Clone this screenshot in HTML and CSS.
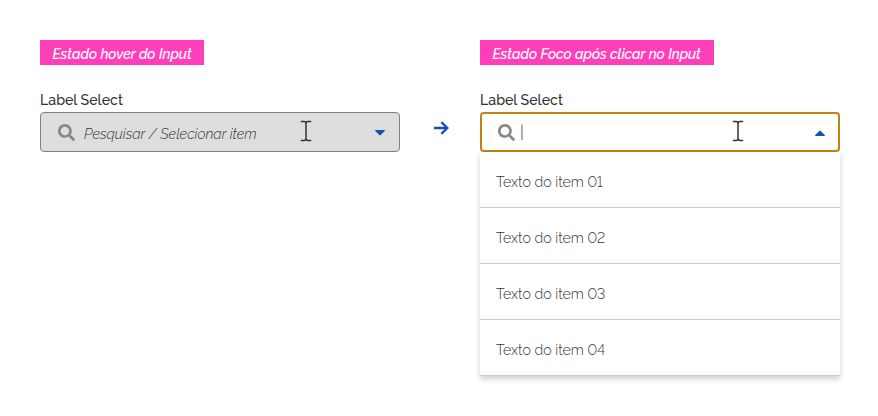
FILE: index.html
```html
<!DOCTYPE html>
<html lang="pt-BR">
<head>
<meta charset="utf-8">
<title>Select</title>
<link rel="stylesheet" href="styles.css">
</head>
<body>
<svg class="defs" width="0" height="0" aria-hidden="true">
  <symbol id="search" viewBox="0 0 512 512"><path d="M505 442.700 405.300 343c-4.500-4.500-10.600-7-17-7H372c27.600-35.300 44-79.700 44-128C416 93.100 322.900 0 208 0S0 93.100 0 208s93.100 208 208 208c48.300 0 92.700-16.400 128-44v16.300c0 6.400 2.500 12.500 7 17l99.700 99.700c9.400 9.400 24.600 9.400 33.900 0l28.300-28.300c9.400-9.400 9.400-24.600.1-34zM208 336c-70.700 0-128-57.200-128-128 0-70.700 57.200-128 128-128 70.700 0 128 57.200 128 128 0 70.700-57.200 128-128 128z"/></symbol>
  <symbol id="beam" viewBox="0 0 12 22"><path d="M.8 1.500H4Q6 1.500 6 3.500V18.500Q6 20.500 4 20.500H.8M11.200 1.500H8Q6 1.500 6 3.500M6 18.500Q6 20.500 8 20.500H11.200"/></symbol>
</svg>
<main class="board">
  <section class="state">
    <span class="tag hover-tag">Estado hover do Input</span>
    <label class="label">Label Select</label>
    <div class="field hover">
      <svg class="search"><use href="#search"/></svg>
      <span class="placeholder">Pesquisar / Selecionar item</span>
      <svg class="beam"><use href="#beam"/></svg>
      <svg class="caret" viewBox="0 0 10 6"><path d="M.6 0H9.400Q10.300.3 9.700 1L5.700 5Q5 5.600 4.300 5L.3 1Q-.3.3.6 0Z"/></svg>
    </div>
  </section>
  <svg class="arrow" viewBox="0 0 15 14"><path d="M0 7H13.500M7.400 1.100 13.300 7 7.400 12.900"/></svg>
  <section class="state">
    <span class="tag focus-tag">Estado Foco após clicar no Input</span>
    <label class="label">Label Select</label>
    <div class="field focus">
      <svg class="search"><use href="#search"/></svg>
      <span class="cursor">|</span>
      <svg class="beam"><use href="#beam"/></svg>
      <svg class="caret" viewBox="0 0 10 6"><path d="M.6 6H9.400Q10.300 5.700 9.700 5L5.700 1Q5 .4 4.300 1L.3 5Q-.3 5.700.6 6Z"/></svg>
    </div>
    <ul class="list">
      <li>Texto do item 01</li>
      <li>Texto do item 02</li>
      <li>Texto do item 03</li>
      <li>Texto do item 04</li>
    </ul>
  </section>
</main>
</body>
</html>
```
FILE: styles.css
```css
* { box-sizing: border-box; }
body { margin: 0; background: #fff; color: #333; font-family: Raleway, Lato, sans-serif; font-size: 14px; font-variant-numeric: lining-nums; }
.defs { display: block; }
.board { display: flex; align-items: flex-start; padding: 40px 38px 40px 40px; }
.state { flex: none; width: 360px; display: flex; flex-direction: column; align-items: flex-start; }
.tag { height: 25px; padding-left: 12.500px; background: #ff3eb9; color: #fff; font-size: 14px; font-weight: 500; font-style: italic; line-height: 28px; white-space: nowrap; -webkit-text-stroke: 0.15px #fff; }
.hover-tag { width: 164px; }
.focus-tag { width: 234px; }
.label { margin-top: 25px; height: 22px; line-height: 20px; font-weight: 500; font-size: 14.200px; }
.field { width: 360px; height: 40px; display: flex; align-items: center; border-radius: 4px; }
.hover { border: 1px solid #808080; background: #dedede; padding: 0 14px 0 17px; }
.focus { border: 2px solid #c2850c; padding: 0 13px 0 16px; }
.search { width: 17px; height: 17px; fill: #888; }
.placeholder { width: 216px; margin: 3px 0 0 9px; font-size: 14.200px; font-weight: 300; font-style: italic; white-space: nowrap; }
.beam { width: 12px; height: 22px; fill: none; stroke: #333; stroke-width: 1.500; margin-top: -2px; }
.cursor { width: 12px; margin-left: 5px; font-size: 17px; line-height: 20px; font-weight: 300; color: #333; }
.focus .beam { margin-left: 200px; }
.caret { width: 10px; height: 6px; margin-left: auto; margin-top: 1px; fill: #1351b4; }
.arrow { flex: none; width: 15px; height: 14px; margin: 81px 31px 0 34px; fill: none; stroke: #1351b4; stroke-width: 2.300; }
.list { width: 360px; margin: 0; padding: 0; list-style: none; box-shadow: 0 3px 6px rgba(0, 0, 0, 0.2); }
.list li { height: 56px; padding: 4px 16px 0; border-bottom: 1px solid #ccc; line-height: 52px; font-size: 14.200px; font-weight: 300; }
```
